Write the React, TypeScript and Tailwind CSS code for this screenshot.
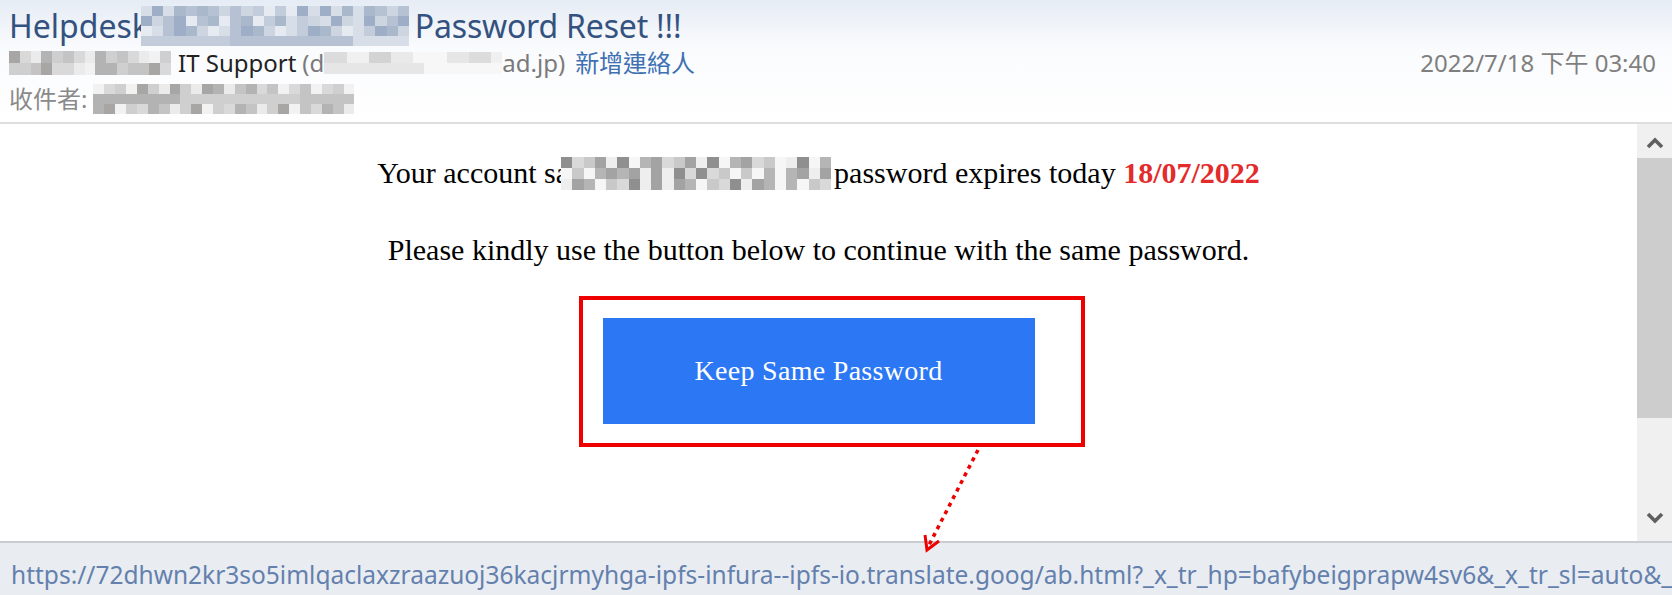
import React from "react";

const PALETTES: Record<string, string[]> = {
  blue: [
    "bg-[#d7dee8]",
    "bg-[#c2ccda]",
    "bg-[#aab8cc]",
    "bg-[#e6ebf2]",
    "bg-[#b6c2d3]",
    "bg-[#9eaec6]",
    "bg-[#cdd5e1]",
  ],
  gray: [
    "bg-[#d9d9d9]",
    "bg-[#c4c4c4]",
    "bg-[#b3b3b3]",
    "bg-[#ebebeb]",
    "bg-[#a8a5a5]",
    "bg-[#cfcfcf]",
    "bg-[#f2f2f2]",
  ],
  light: [
    "bg-[#e6e6e6]",
    "bg-[#dcdcdc]",
    "bg-[#f0f0f0]",
    "bg-[#d3d3d3]",
    "bg-[#e9e9e9]",
    "bg-[#f7f7f7]",
  ],
  dark: [
    "bg-[#8f8f8f]",
    "bg-[#b5b5b5]",
    "bg-[#d9d9d9]",
    "bg-[#a3a3a3]",
    "bg-[#c9c9c9]",
    "bg-[#eeeeee]",
    "bg-[#f6f6f6]",
  ],
};

function Mosaic({
  rows,
  cols,
  palette,
  seed,
  className,
  rowClass,
}: {
  rows: number;
  cols: number;
  palette: string;
  seed: number;
  className: string;
  rowClass: string;
}) {
  const p = PALETTES[palette];
  return (
    <span className={"relative inline-flex flex-col " + className}>
      {Array.from({ length: rows }).map((_, r) => (
        <span key={r} className={"flex " + rowClass}>
          {Array.from({ length: cols }).map((__, c) => {
            const idx = (r * 7 + c * 13 + seed * 5 + ((r + 1) * (c + 3) * (seed + 2)) % 11) % p.length;
            return <span key={c} className={"flex-1 " + p[idx]} />;
          })}
        </span>
      ))}
    </span>
  );
}

function Chevron({ up }: { up: boolean }) {
  return (
    <svg width="18" height="12" viewBox="0 0 18 12">
      <polyline
        points={up ? "2,10 9,3 16,10" : "2,2 9,9 16,2"}
        fill="none"
        stroke="#5f5f5f"
        strokeWidth="3.6"
        strokeLinejoin="miter"
      />
    </svg>
  );
}

export default function App() {
  return (
    <div className="relative w-[1672px] h-[595px] overflow-hidden bg-white flex flex-col font-['Noto_Sans','Noto_Sans_CJK_TC',sans-serif]">
      {/* Header */}
      <div className="h-[124px] shrink-0 bg-linear-to-b from-[#e6ecf5] via-[#fafbfd] via-40% to-white border-b-2 border-[#dedede] pl-[9px] pr-[16px] pt-[7px]">
        <div className="flex items-center h-[38px] text-[32px] leading-[38px] text-[#34527f] whitespace-nowrap">
          <span>Helpdesk</span>
          <Mosaic rows={4} cols={24} palette="blue" seed={1} className="w-[268px] -ml-[8px]" rowClass="h-[10px]" />
          <span className="ml-[6px] tracking-[-0.2px]">Password Reset !!!</span>
        </div>
        <div className="flex items-center justify-between h-[36px] text-[24px] leading-[36px] whitespace-nowrap">
          <div className="flex items-center">
            <Mosaic rows={2} cols={15} palette="gray" seed={2} className="w-[162px]" rowClass="h-[12px]" />
            <span className="ml-[7px] text-[#222222]">IT Support</span>
            <span className="ml-[6px] text-[#7a7a7a]">(d</span>
            <Mosaic rows={2} cols={16} palette="light" seed={3} className="w-[178px]" rowClass="h-[11px]" />
            <span className="text-[#7a7a7a]">ad.jp)</span>
            <span className="ml-[10px] text-[#3e70b3]">新增連絡人</span>
          </div>
          <span className="text-[#7f7f7f]">2022/7/18 下午 03:40</span>
        </div>
        <div className="flex items-center h-[36px] text-[24px] leading-[36px] text-[#8a8a8a] whitespace-nowrap">
          <span>收件者:</span>
          <Mosaic rows={3} cols={24} palette="gray" seed={4} className="w-[261px] ml-[6px]" rowClass="h-[10px]" />
        </div>
      </div>

      {/* Body */}
      <div className="flex flex-1 min-h-0">
        <div className="relative flex-1 flex flex-col items-center pt-[32px] font-['Liberation_Serif',serif] text-black text-[30px] leading-[34px]">
          <div className="flex items-center whitespace-nowrap">
            <span>Your account sa</span>
            <Mosaic rows={3} cols={24} palette="dark" seed={5} className="w-[270px] -ml-[8px]" rowClass="h-[11px]" />
            <span className="ml-[3px]">password expires today&nbsp;</span>
            <b className="text-[#e32b2b]">18/07/2022</b>
          </div>
          <div className="mt-[43px] whitespace-nowrap">
            Please kindly use the button below to continue with the same password.
          </div>
          <div className="relative mt-[51px]">
            <div className="w-[432px] h-[106px] bg-[#2c77f4] flex items-center justify-center text-white text-[28px] tracking-[0.3px]">
              Keep Same Password
            </div>
            <div className="absolute -left-[24px] -right-[50px] -top-[22px] -bottom-[23px] border-4 border-[#ee0000]" />
          </div>
        </div>
        {/* Scrollbar */}
        <div className="w-[35px] shrink-0 bg-[#f0f0f0] flex flex-col">
          <div className="h-[34px] flex items-center justify-center pt-[4px]">
            <Chevron up />
          </div>
          <div className="h-[260px] bg-[#cdcdcd]" />
          <div className="flex-1" />
          <div className="h-[34px] mb-[6px] flex items-center justify-center">
            <Chevron up={false} />
          </div>
        </div>
      </div>

      {/* Status bar */}
      <div className="h-[54px] shrink-0 bg-[#e9edf2] border-t-2 border-[#c9ccd1] flex items-center pl-[11px] pt-[12px] overflow-hidden">
        <span className="text-[24.5px] leading-[32px] text-[#6480ad] whitespace-nowrap">
          https://72dhwn2kr3so5imlqaclaxzraazuoj36kacjrmyhga-ipfs-infura--ipfs-io.translate.goog/ab.html?_x_tr_hp=bafybeigprapw4sv6&amp;_x_tr_sl=auto&amp;_
        </span>
      </div>

      {/* Annotation arrow */}
      <svg className="absolute left-0 top-0 pointer-events-none" width="1672" height="595" viewBox="0 0 1672 595">
        <line x1="978" y1="450" x2="928" y2="547" stroke="#ee0000" strokeWidth="3.5" strokeDasharray="4 4.5" />
        <polyline points="925,535 927,550 939,541" fill="none" stroke="#ee0000" strokeWidth="3" />
      </svg>
    </div>
  );
}
